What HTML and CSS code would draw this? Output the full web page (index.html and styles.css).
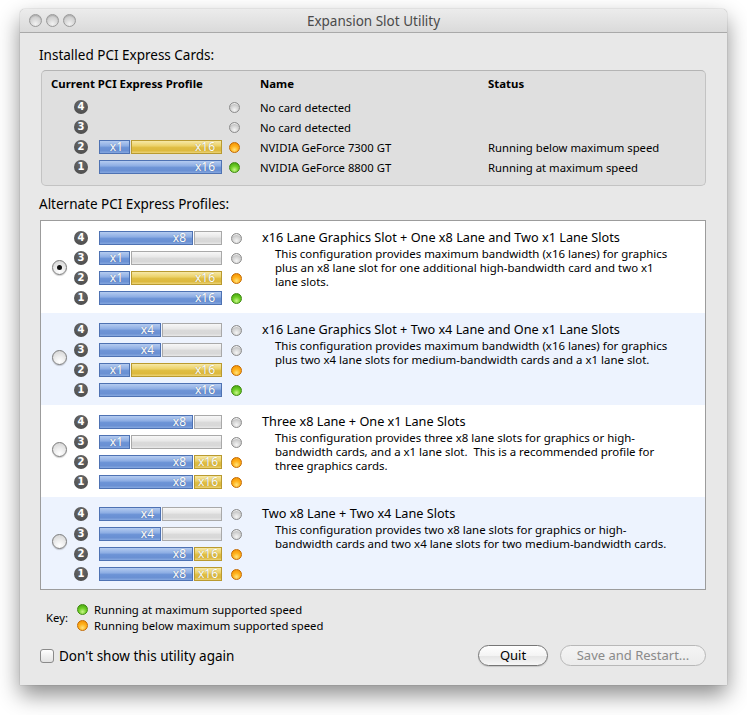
FILE: index.html
```html
<!DOCTYPE html>
<html>
<head>
<meta charset="utf-8">
<title>Expansion Slot Utility</title>
<link rel="stylesheet" href="styles.css">
</head>
<body>
<div class="window">
  <div class="titlebar">
    <div class="lights"><span class="light"></span><span class="light"></span><span class="light"></span></div>
    <div class="title">Expansion Slot Utility</div>
  </div>
  <div class="content">
    <div class="section-label">Installed PCI Express Cards:</div>
    <div class="installed">
      <div class="inst-head">
        <span class="col-profile">Current PCI Express Profile</span>
        <span class="col-name">Name</span>
        <span class="col-status">Status</span>
      </div>
      <div class="inst-row">
        <span class="badge">4</span><span class="bar blank"></span><span class="dot gray"></span>
        <span class="inst-name">No card detected</span><span class="inst-status"></span>
      </div>
      <div class="inst-row">
        <span class="badge">3</span><span class="bar blank"></span><span class="dot gray"></span>
        <span class="inst-name">No card detected</span><span class="inst-status"></span>
      </div>
      <div class="inst-row">
        <span class="badge">2</span>
        <span class="bar"><span class="seg blue w1">x1</span><span class="seg yellow fill">x16</span></span>
        <span class="dot orange"></span>
        <span class="inst-name">NVIDIA GeForce 7300 GT</span><span class="inst-status">Running below maximum speed</span>
      </div>
      <div class="inst-row">
        <span class="badge">1</span>
        <span class="bar"><span class="seg blue fill">x16</span></span>
        <span class="dot green"></span>
        <span class="inst-name">NVIDIA GeForce 8800 GT</span><span class="inst-status">Running at maximum speed</span>
      </div>
    </div>

    <div class="section-label alt-label">Alternate PCI Express Profiles:</div>
    <div class="profiles">
      <div class="profile first">
        <span class="radio checked"></span>
        <div class="slots">
          <div class="slot"><span class="badge">4</span><span class="bar"><span class="seg blue w8">x8</span><span class="seg empty fill"></span></span><span class="dot gray"></span></div>
          <div class="slot"><span class="badge">3</span><span class="bar"><span class="seg blue w1">x1</span><span class="seg empty fill"></span></span><span class="dot gray"></span></div>
          <div class="slot"><span class="badge">2</span><span class="bar"><span class="seg blue w1">x1</span><span class="seg yellow fill">x16</span></span><span class="dot orange"></span></div>
          <div class="slot"><span class="badge">1</span><span class="bar"><span class="seg blue fill">x16</span></span><span class="dot green"></span></div>
        </div>
        <div class="info">
          <div class="info-title">x16 Lane Graphics Slot + One x8 Lane and Two x1 Lane Slots</div>
          <div class="info-desc">This configuration provides maximum bandwidth (x16 lanes) for graphics<br>plus an x8 lane slot for one additional high-bandwidth card and two x1<br>lane slots.</div>
        </div>
      </div>

      <div class="profile alt">
        <span class="radio"></span>
        <div class="slots">
          <div class="slot"><span class="badge">4</span><span class="bar"><span class="seg blue w4">x4</span><span class="seg empty fill"></span></span><span class="dot gray"></span></div>
          <div class="slot"><span class="badge">3</span><span class="bar"><span class="seg blue w4">x4</span><span class="seg empty fill"></span></span><span class="dot gray"></span></div>
          <div class="slot"><span class="badge">2</span><span class="bar"><span class="seg blue w1">x1</span><span class="seg yellow fill">x16</span></span><span class="dot orange"></span></div>
          <div class="slot"><span class="badge">1</span><span class="bar"><span class="seg blue fill">x16</span></span><span class="dot green"></span></div>
        </div>
        <div class="info">
          <div class="info-title">x16 Lane Graphics Slot + Two x4 Lane and One x1 Lane Slots</div>
          <div class="info-desc">This configuration provides maximum bandwidth (x16 lanes) for graphics<br>plus two x4 lane slots for medium-bandwidth cards and a x1 lane slot.</div>
        </div>
      </div>

      <div class="profile">
        <span class="radio"></span>
        <div class="slots">
          <div class="slot"><span class="badge">4</span><span class="bar"><span class="seg blue w8">x8</span><span class="seg empty fill"></span></span><span class="dot gray"></span></div>
          <div class="slot"><span class="badge">3</span><span class="bar"><span class="seg blue w1">x1</span><span class="seg empty fill"></span></span><span class="dot gray"></span></div>
          <div class="slot"><span class="badge">2</span><span class="bar"><span class="seg blue w8">x8</span><span class="seg yellow fill short">x16</span></span><span class="dot orange"></span></div>
          <div class="slot"><span class="badge">1</span><span class="bar"><span class="seg blue w8">x8</span><span class="seg yellow fill short">x16</span></span><span class="dot orange"></span></div>
        </div>
        <div class="info">
          <div class="info-title">Three x8 Lane + One x1 Lane Slots</div>
          <div class="info-desc">This configuration provides three x8 lane slots for graphics or high-<br>bandwidth cards, and a x1 lane slot.&nbsp; This is a recommended profile for<br>three graphics cards.</div>
        </div>
      </div>

      <div class="profile alt">
        <span class="radio"></span>
        <div class="slots">
          <div class="slot"><span class="badge">4</span><span class="bar"><span class="seg blue w4">x4</span><span class="seg empty fill"></span></span><span class="dot gray"></span></div>
          <div class="slot"><span class="badge">3</span><span class="bar"><span class="seg blue w4">x4</span><span class="seg empty fill"></span></span><span class="dot gray"></span></div>
          <div class="slot"><span class="badge">2</span><span class="bar"><span class="seg blue w8">x8</span><span class="seg yellow fill short">x16</span></span><span class="dot orange"></span></div>
          <div class="slot"><span class="badge">1</span><span class="bar"><span class="seg blue w8">x8</span><span class="seg yellow fill short">x16</span></span><span class="dot orange"></span></div>
        </div>
        <div class="info">
          <div class="info-title">Two x8 Lane + Two x4 Lane Slots</div>
          <div class="info-desc">This configuration provides two x8 lane slots for graphics or high-<br>bandwidth cards and two x4 lane slots for two medium-bandwidth cards.</div>
        </div>
      </div>
    </div>

    <div class="key">
      <span class="key-label">Key:</span>
      <div class="key-items">
        <div class="key-item"><span class="dot green"></span><span>Running at maximum supported speed</span></div>
        <div class="key-item"><span class="dot orange"></span><span>Running below maximum supported speed</span></div>
      </div>
    </div>

    <div class="bottom">
      <label class="check"><span class="checkbox"></span><span>Don't show this utility again</span></label>
      <div class="buttons">
        <span class="button quit">Quit</span>
        <span class="button disabled">Save and Restart...</span>
      </div>
    </div>
  </div>
</div>
</body>
</html>
```
FILE: styles.css
```css
* { box-sizing: border-box; }

html, body {
  margin: 0;
  padding: 0;
  background: #ffffff;
}

body {
  font-family: "Noto Sans", "DejaVu Sans", sans-serif;
  color: #000;
  width: 747px;
  height: 715px;
  overflow: hidden;
  padding-top: 9px;
  padding-left: 20px;
}

.window {
  width: 707px;
  height: 676px;
  background: #e8e8e8;
  box-shadow: 0 10px 22px rgba(0,0,0,0.45), 0 0 1px rgba(0,0,0,0.5);
  border-radius: 5px 5px 0 0;
  display: flex;
  flex-direction: column;
}

.titlebar {
  height: 24px;
  flex: none;
  position: relative;
  display: flex;
  align-items: center;
  justify-content: center;
  background: linear-gradient(#ececec, #dadada);
  border-bottom: 1px solid #a9a9a9;
  border-radius: 5px 5px 0 0;
}

.lights {
  position: absolute;
  left: 9px;
  top: 5px;
  display: flex;
  gap: 4px;
}

.light {
  width: 13px;
  height: 13px;
  border-radius: 50%;
  border: 1px solid #9a9a9a;
  background: radial-gradient(circle at 50% 80%, #f2f2f2 0%, #d8d8d8 45%, #c2c2c2 100%);
  box-shadow: inset 0 1px 1px rgba(0,0,0,0.15);
}

.title {
  font-size: 13.5px;
  color: #4a4a4a;
  line-height: 16px;
}

.content {
  padding: 14px 21px 0 20px;
  display: flex;
  flex-direction: column;
}

.section-label {
  font-size: 13.5px;
  line-height: 16px;
  margin-left: -1px;
}

.alt-label {
  margin-top: 10px;
}

/* Installed box */
.installed {
  margin-top: 7px;
  margin-left: 1px;
  height: 116px;
  background: #dfdfdf;
  border: 1px solid #c3c3c3;
  border-top-color: #b4b4b4;
  border-radius: 5px;
  padding: 5px 0 0 9px;
}

.inst-head {
  display: flex;
  font-size: 11.4px;
  font-weight: bold;
  line-height: 16px;
  height: 16px;
}

.col-profile { width: 209px; }
.col-name { width: 228px; }

.inst-row {
  display: flex;
  align-items: center;
  height: 14px;
  margin-top: 6px;
  font-size: 11.3px;
}

.inst-head + .inst-row { margin-top: 8px; }

.inst-row .badge { margin-left: 23px; }
.inst-row .bar { margin-left: 11px; }
.inst-row .dot { margin-left: 7px; }
.inst-name { margin-left: 20px; width: 228px; }

/* Common pieces */
.badge {
  flex: none;
  width: 14px;
  height: 14px;
  border-radius: 50%;
  background: radial-gradient(circle at 50% 30%, #6a6a6a, #474747);
  color: #fff;
  font-size: 10px;
  font-weight: bold;
  line-height: 14px;
  text-align: center;
  font-family: "DejaVu Sans", sans-serif;
}

.bar {
  flex: none;
  width: 123px;
  height: 14px;
  display: flex;
  gap: 1px;
}

.bar.blank { background: transparent; }

.seg {
  height: 14px;
  border: 1px solid;
  color: #fff;
  font-size: 12px;
  line-height: 12px;
  text-align: right;
  padding-right: 6px;
  text-shadow: 0 0 1px rgba(0,0,0,0.35);
}

.seg.blue {
  border-color: #4e72b3;
  background: linear-gradient(#b4cbf0 0%, #8eaee4 40%, #6c93d6 55%, #6a90d3 80%, #86a8e0 100%);
}

.seg.yellow {
  border-color: #b99a30;
  background: linear-gradient(#f6e8a6 0%, #ecd26a 40%, #dfbd42 55%, #ddb93e 80%, #ecd478 100%);
}

.seg.empty {
  border-color: #a9a9a9;
  background: linear-gradient(#f7f7f7 0%, #e8e8e8 40%, #d9d9d9 55%, #d8d8d8 80%, #e8e8e8 100%);
}

.seg.w1 { width: 31px; }
.seg.w4 { width: 62px; }
.seg.w8 { width: 94px; }
.seg.fill { flex: 1; }
.seg.short { text-align: center; padding-right: 0; }

.dot {
  flex: none;
  width: 11px;
  height: 11px;
  border-radius: 50%;
  border: 1px solid;
}

.dot.gray {
  border-color: #8c8c8c;
  background: radial-gradient(circle at 50% 75%, #f4f4f4 0%, #d2d2d2 50%, #a8a8a8 100%);
  box-shadow: inset 0 2px 0 -1px #eee;
}

.dot.orange {
  border-color: #c46a00;
  background: radial-gradient(circle at 50% 75%, #ffe27a 0%, #ffb21c 45%, #f08a00 100%);
}

.dot.green {
  border-color: #3f8a10;
  background: radial-gradient(circle at 50% 75%, #c8f58a 0%, #6fcf26 45%, #3f9a0c 100%);
}

/* Profiles list */
.profiles {
  margin-top: 8px;
  background: #fff;
  border: 1px solid #9c9c9c;
  display: flex;
  flex-direction: column;
}

.profile {
  height: 92px;
  display: flex;
  align-items: flex-start;
  padding-top: 10px;
}

.profile.alt { background: #edf3fe; }

.radio {
  flex: none;
  align-self: center;
  margin-top: -14px;
  margin-left: 11px;
  width: 15px;
  height: 15px;
  border-radius: 50%;
  border: 1px solid #7b7b7b;
  background: radial-gradient(circle at 50% 80%, #ffffff 0%, #eeeeee 40%, #cfcfcf 100%);
  box-shadow: 0 1px 1px rgba(0,0,0,0.2);
  display: flex;
  align-items: center;
  justify-content: center;
}

.profile.first .radio { margin-top: -10px; }

.radio.checked::after {
  content: "";
  width: 5px;
  height: 5px;
  border-radius: 50%;
  background: #111;
}

.slots {
  margin-left: 7px;
  display: flex;
  flex-direction: column;
  gap: 6px;
}

.slot {
  display: flex;
  align-items: center;
  height: 14px;
}

.slot .bar { margin-left: 11px; }
.slot .dot { margin-left: 9px; }

.info {
  margin-left: 20px;
  margin-top: -2px;
}

.info-title {
  font-size: 12.7px;
  line-height: 16px;
}

.info-desc {
  font-size: 11.45px;
  line-height: 14px;
  margin-top: 2px;
  padding-left: 13px;
}

/* Key */
.key {
  margin-top: 11px;
  display: flex;
  align-items: center;
  font-size: 11.3px;
}

.key-label {
  margin-left: 6px;
  width: 31px;
}

.key-items {
  display: flex;
  flex-direction: column;
}

.key-item {
  display: flex;
  align-items: center;
  height: 16px;
}

.key-item .dot { margin-right: 6px; }

/* Bottom */
.bottom {
  margin-top: 12px;
  display: flex;
  align-items: center;
  justify-content: space-between;
  height: 21px;
}

.check {
  display: flex;
  align-items: center;
  font-size: 13.5px;
}

.checkbox {
  width: 14px;
  height: 14px;
  border: 1px solid #8a8a8a;
  border-radius: 3px;
  background: linear-gradient(#ffffff, #f0f0f0 50%, #e2e2e2);
  margin-right: 5px;
}

.buttons {
  display: flex;
  gap: 12px;
}

.button {
  height: 21px;
  border-radius: 11px;
  border: 1px solid #767676;
  background: linear-gradient(#ffffff, #f4f4f4 50%, #e6e6e6 55%, #f7f7f7);
  font-size: 13px;
  line-height: 19px;
  text-align: center;
  box-shadow: 0 1px 1px rgba(0,0,0,0.15);
}

.button.quit { width: 70px; }

.button.disabled {
  width: 146px;
  border-color: #b8b8b8;
  color: #8a8a8a;
  background: linear-gradient(#f4f4f4, #ececec);
  box-shadow: none;
}
```
